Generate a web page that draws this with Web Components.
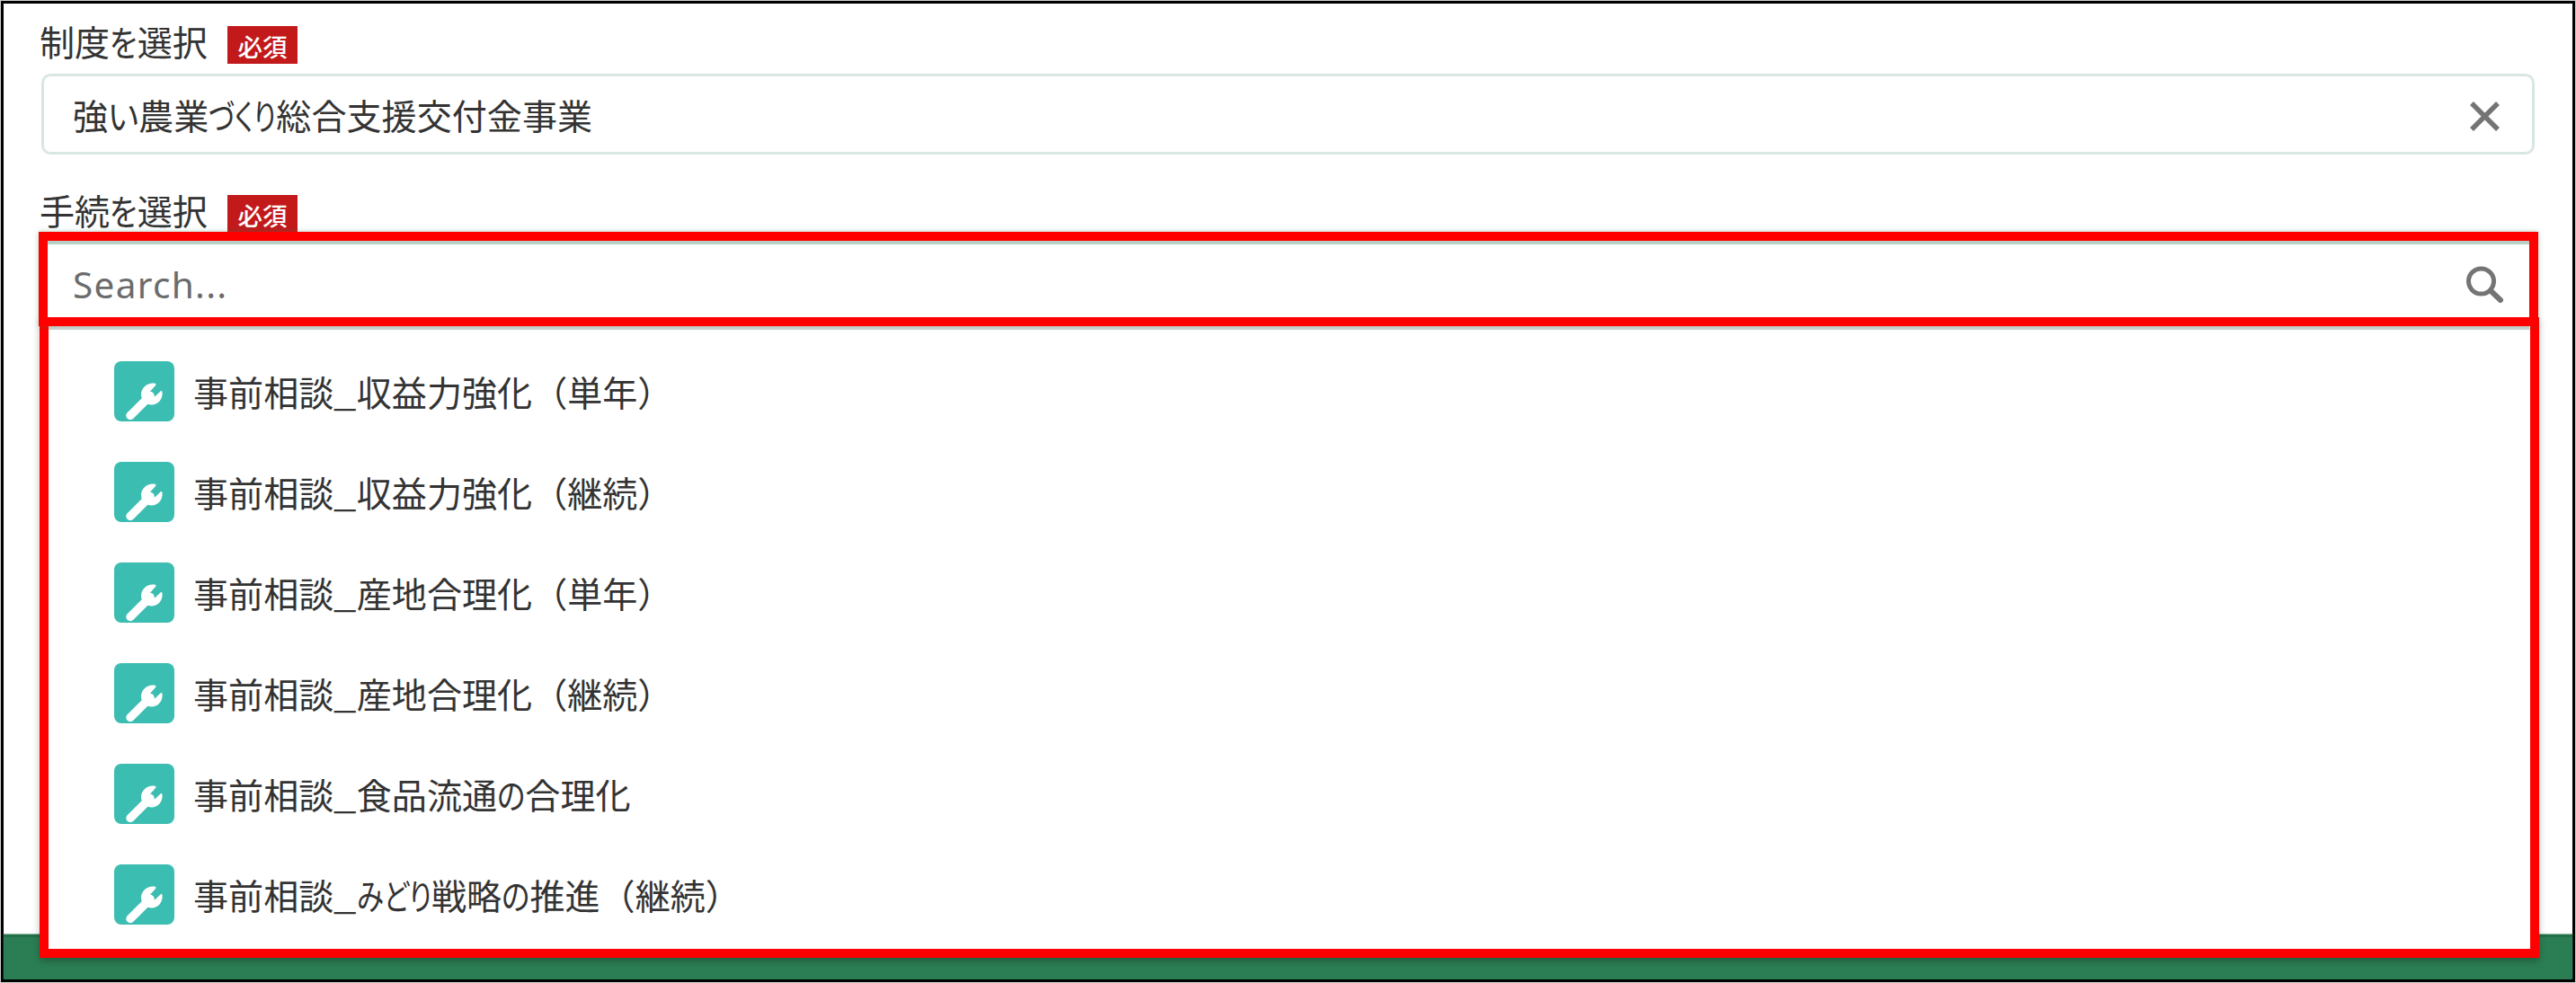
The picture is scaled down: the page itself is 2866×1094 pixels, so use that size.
<!DOCTYPE html>
<html lang="ja">
<head>
<meta charset="utf-8">
<title>制度・手続の選択</title>
<style>
  html, body { margin: 0; height: 100%; background: #fff; }
  body { font-family: "Noto Sans", "Noto Sans CJK JP", sans-serif; font-size: 39.1px; color: #333; overflow: hidden; }
</style>
</head>
<body>
<app-frame>
  <form-field label="制度を選択" required="必須">
    <lookup-input value="強い農業づくり総合支援交付金事業"></lookup-input>
  </form-field>
  <form-field label="手続を選択" required="必須">
    <lookup-input placeholder="Search..." active></lookup-input>
    <option-list slot="menu">
      <option-item>事前相談_収益力強化（単年）</option-item>
      <option-item>事前相談_収益力強化（継続）</option-item>
      <option-item>事前相談_産地合理化（単年）</option-item>
      <option-item>事前相談_産地合理化（継続）</option-item>
      <option-item>事前相談_食品流通の合理化</option-item>
      <option-item>事前相談_みどり戦略の推進（継続）</option-item>
    </option-list>
  </form-field>
</app-frame>

<script>
// Advance widths in em for the condensed characters, kanji stay full width
const ADVANCE = { "い": .87, "づ": .81, "く": .51, "り": .60, "を": .78, "の": .80, "み": .82, "ど": .71, "_": .65 };

/** <ui-text> — one line of Japanese text with condensed kana. */
class UiText extends HTMLElement {
  constructor() { super(); this.attachShadow({ mode: "open" }); }
  connectedCallback() {
    const text = this.getAttribute("text");
    const runs = text.split(/([ぁ-ん]+|_)/).filter(Boolean);
    this.shadowRoot.innerHTML = `
      <style>
        :host{display:inline-block;white-space:nowrap;line-height:1.5;font-family:"Noto Sans CJK JP",sans-serif}
        .k{display:inline-block;transform-origin:0 50%;font-feature-settings:"palt"}
      </style>${runs.map((r) => r[0] in ADVANCE ? `<span class="k">${r}</span>` : r).join("")}`;
    // squeeze each run from its natural width to the width in the table
    const size = parseFloat(getComputedStyle(this).fontSize);
    this.shadowRoot.querySelectorAll(".k").forEach((k) => {
      const w = [...k.textContent].reduce((s, c) => s + ADVANCE[c], 0) * size;
      const natural = k.getBoundingClientRect().width || w;
      k.style.width = w + "px";
      k.style.transform = `scaleX(${w / natural})`;
    });
  }
}

/** <app-frame> — outlined page with the footer band. */
class AppFrame extends HTMLElement {
  constructor() { super(); this.attachShadow({ mode: "open" }); }
  connectedCallback() {
    this.shadowRoot.innerHTML = `
      <style>
        :host{display:block;box-sizing:border-box;height:1094px;padding:1px;background:#ccd0ce}
        .page{box-sizing:border-box;height:1092px;border:3px solid #000;background:#fff;display:flex;flex-direction:column}
        main{flex:1;display:flex;flex-direction:column;gap:20px;padding:0 42px}
        footer{height:50px;box-sizing:border-box;background:#2b7e54;border-top:3px solid #237047;box-shadow:0 -1px 1px #9fc4b1}
      </style>
      <div class="page"><main><slot></slot></main><footer></footer></div>`;
  }
}

/** <form-field> — label, required badge, control and an optional menu. */
class FormField extends HTMLElement {
  constructor() { super(); this.attachShadow({ mode: "open" }); }
  connectedCallback() {
    this.shadowRoot.innerHTML = `
      <style>
        :host{display:block;position:relative}
        .label{display:flex;align-items:flex-start;height:78px}
        .label > ui-text{width:209px;margin:12px 0 0 -2px}
        .badge{box-sizing:border-box;width:78px;height:42px;margin-top:25px;background:#c21a1b;color:#fff;
          font-size:27.5px;font-weight:500;display:flex;align-items:center;justify-content:center;padding-top:4px}
      </style>
      <div class="label">
        <ui-text text="${this.getAttribute("label")}"></ui-text>
        <div class="badge"><ui-text text="${this.getAttribute("required")}"></ui-text></div>
      </div>
      <slot></slot>
      <slot name="menu"></slot>`;
  }
}

/** <lookup-input> — filled or empty lookup box; "active" marks it with the red outline. */
class LookupInput extends HTMLElement {
  constructor() { super(); this.attachShadow({ mode: "open" }); }
  connectedCallback() {
    const value = this.getAttribute("value");
    this.shadowRoot.innerHTML = `
      <style>
        :host{display:block}
        .box{box-sizing:border-box;height:90px;border:3px solid #d8e8e0;border-radius:10px;background:#fff;
          display:flex;align-items:center;justify-content:space-between;padding:0 28px 0 32px}
        :host([active]){position:relative;z-index:2;margin:-12px -4px 0 -3px}
        :host([active]) .box{height:105px;border:10px solid #f00;border-radius:0;padding:0 27px 0 28px;
          box-shadow:inset 0 4px 1px #b5cfc2,0 0 6px rgba(43,126,84,.35)}
        .hint{color:#6b6b6b;font-size:40.5px;letter-spacing:1.3px;line-height:1.4;padding-top:13px}
        svg{display:block;fill:none;stroke:#747474;flex:0 0 auto}
      </style>
      <div class="box">${value
        ? `<ui-text text="${value}"></ui-text>
           <svg width="48" height="48" viewBox="0 0 48 48" style="margin-top:8px" stroke-width="5.5"><path d="M9 8 38 37M38 8 9 37"/></svg>`
        : `<span class="hint">${this.getAttribute("placeholder")}</span>
           <svg width="48" height="48" viewBox="0 0 48 48" style="margin-top:15px" stroke-width="5"><circle cx="21.500" cy="19" r="14"/><path stroke-width="6" stroke-linecap="round" d="M32 29.500 43 40"/></svg>`}
      </div>`;
  }
}

/** <option-list> — drop-down menu over the page. */
class OptionList extends HTMLElement {
  constructor() { super(); this.attachShadow({ mode: "open" }); }
  connectedCallback() {
    this.shadowRoot.innerHTML = `
      <style>
        :host{position:absolute;z-index:1;top:161px;left:-2px;right:-5px;height:713px;box-sizing:border-box;
          border:10px solid #f00;background:#fff;padding:0 0 0 73px;box-shadow:0 4px 8px rgba(0,0,0,.25)}
        .rule{height:4px;margin:0 0 12px -73px;border-radius:0 8px 0 0;background:#d6d6d6}
      </style>
      <div class="rule"></div>
      <slot></slot>`;
  }
}

/** <option-item> — wrench icon and the name of a procedure. */
class OptionItem extends HTMLElement {
  constructor() { super(); this.attachShadow({ mode: "open" }); }
  connectedCallback() {
    this.shadowRoot.innerHTML = `
      <style>
        :host{display:flex;align-items:center;height:112px;gap:21px}
        svg{display:block;flex:0 0 auto}
      </style>
      <svg width="67" height="67" viewBox="0 0 67 67">
        <rect width="67" height="67" rx="8" fill="#3bbdb1"/>
        <path d="M18 60.500 40 38.500" stroke="#fff" stroke-width="9.500" stroke-linecap="round"/>
        <path fill="#fff" d="M45.500 24.700c-8-1.500-15.500 4.500-15.500 12.300 0 6.600 5.300 11.500 11.700 11.500 7.300 0 12.900-6.700 11.800-14.500-.2-1.100-1.300-1.300-2-.6l-5.800 5.600c-.6.6-1.500.6-2.100 0l-3.400-3.400c-.6-.6-.6-1.500 0-2.100l5.800-6.400c.8-.9.600-2.200-.5-2.400z"/>
      </svg>
      <ui-text text="${this.textContent.trim()}"></ui-text>`;
  }
}

customElements.define("ui-text", UiText);
customElements.define("app-frame", AppFrame);
customElements.define("form-field", FormField);
customElements.define("lookup-input", LookupInput);
customElements.define("option-list", OptionList);
customElements.define("option-item", OptionItem);
</script>
</body>
</html>
